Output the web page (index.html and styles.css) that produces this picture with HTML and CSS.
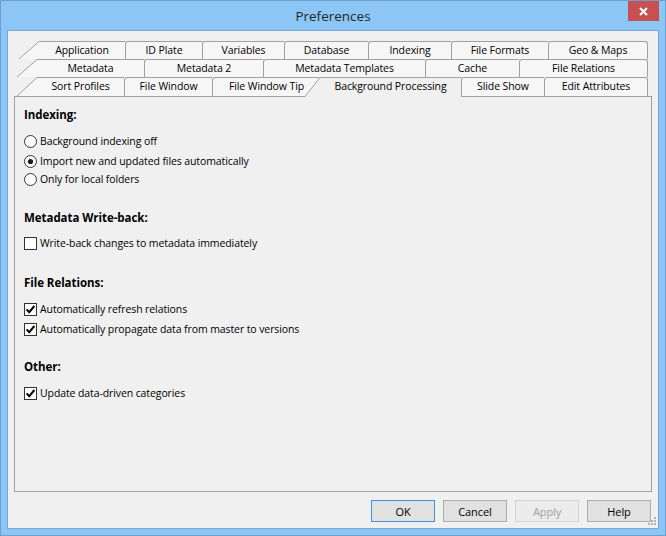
FILE: index.html
```html
<!DOCTYPE html>
<html>
<head>
<meta charset="utf-8">
<title>Preferences</title>
<link rel="stylesheet" href="styles.css">
</head>
<body>
<div class="window">
  <div class="titlebar">
    <div></div>
    <div class="title">Preferences</div>
    <div class="close">
      <svg width="31" height="20" viewBox="0 0 31 20"><path d="M12 7 L19 14 M19 7 L12 14" stroke="#fff" stroke-width="2" fill="none"/></svg>
    </div>
  </div>
  <div class="client">
    <div class="tabs">
      <div class="tabrow r1">
        <svg class="slant" viewBox="0 0 20 18" preserveAspectRatio="none"><polygon points="0,18 20,0 20,18" fill="#f6f6f6"/><line x1="0" y1="18" x2="20" y2="0.5" stroke="#a0a0a0" stroke-width="1"/></svg>
        <div class="tab first">Application</div>
        <div class="tab">ID Plate</div>
        <div class="tab">Variables</div>
        <div class="tab">Database</div>
        <div class="tab">Indexing</div>
        <div class="tab">File Formats</div>
        <div class="tab last">Geo &amp; Maps</div>
      </div>
      <div class="tabrow r2">
        <svg class="slant" viewBox="0 0 20 18" preserveAspectRatio="none"><polygon points="0,18 20,0 20,18" fill="#f6f6f6"/><line x1="0" y1="18" x2="20" y2="0.5" stroke="#a0a0a0" stroke-width="1"/></svg>
        <div class="tab first">Metadata</div>
        <div class="tab">Metadata 2</div>
        <div class="tab">Metadata Templates</div>
        <div class="tab">Cache</div>
        <div class="tab last">File Relations</div>
      </div>
      <div class="tabrow r3">
        <svg class="slant" viewBox="0 0 20 19" preserveAspectRatio="none"><polygon points="0,19 20,0 20,19" fill="#f6f6f6"/><line x1="0" y1="19" x2="20" y2="0.5" stroke="#a0a0a0" stroke-width="1"/></svg>
        <div class="tab first">Sort Profiles</div>
        <div class="tab">File Window</div>
        <div class="tab">File Window Tip</div>
        <div class="tab sel">
          <svg class="selslant" viewBox="0 0 15 20"><polygon points="15,0 15,20 0,20" fill="#f0f0f0"/><line x1="15" y1="0.5" x2="0" y2="19.5" stroke="#a0a0a0" stroke-width="1"/></svg>
          Background Processing
        </div>
        <div class="tab">Slide Show</div>
        <div class="tab last">Edit Attributes</div>
      </div>
    </div>

    <div class="panel">
      <div class="heading">Indexing:</div>
      <div class="opt after-head">
        <svg class="ctl" viewBox="0 0 13 13"><circle cx="6.5" cy="6.5" r="6" fill="#fff" stroke="#333"/></svg>
        <span>Background indexing off</span>
      </div>
      <div class="opt next-radio">
        <svg class="ctl" viewBox="0 0 13 13"><circle cx="6.5" cy="6.5" r="6" fill="#fff" stroke="#333"/><circle cx="6.5" cy="6.5" r="2.6" fill="#1a1a1a"/></svg>
        <span>Import new and updated files automatically</span>
      </div>
      <div class="opt tight">
        <svg class="ctl" viewBox="0 0 13 13"><circle cx="6.5" cy="6.5" r="6" fill="#fff" stroke="#333"/></svg>
        <span>Only for local folders</span>
      </div>

      <div class="heading section">Metadata Write-back:</div>
      <div class="opt after-head short">
        <svg class="ctl" viewBox="0 0 13 13"><rect x="0.5" y="0.5" width="12" height="12" fill="#fff" stroke="#333"/></svg>
        <span>Write-back changes to metadata immediately</span>
      </div>

      <div class="heading section wide">File Relations:</div>
      <div class="opt after-head">
        <svg class="ctl" viewBox="0 0 13 13"><rect x="0.5" y="0.5" width="12" height="12" fill="#fff" stroke="#333"/><path d="M2.6 6.4 L5.2 9.2 L10.4 3" stroke="#000" stroke-width="2" fill="none"/></svg>
        <span>Automatically refresh relations</span>
      </div>
      <div class="opt next-check">
        <svg class="ctl" viewBox="0 0 13 13"><rect x="0.5" y="0.5" width="12" height="12" fill="#fff" stroke="#333"/><path d="M2.6 6.4 L5.2 9.2 L10.4 3" stroke="#000" stroke-width="2" fill="none"/></svg>
        <span>Automatically propagate data from master to versions</span>
      </div>

      <div class="heading section narrow">Other:</div>
      <div class="opt after-head">
        <svg class="ctl" viewBox="0 0 13 13"><rect x="0.5" y="0.5" width="12" height="12" fill="#fff" stroke="#333"/><path d="M2.6 6.4 L5.2 9.2 L10.4 3" stroke="#000" stroke-width="2" fill="none"/></svg>
        <span>Update data-driven categories</span>
      </div>
    </div>

    <div class="buttons">
      <div class="btn default">OK</div>
      <div class="btn">Cancel</div>
      <div class="btn disabled">Apply</div>
      <div class="btn">Help</div>
    </div>

    <svg class="grip" viewBox="0 0 11 11">
      <rect x="8" y="1" width="2" height="2" fill="#b4b4b4"/>
      <rect x="5" y="4" width="2" height="2" fill="#b4b4b4"/>
      <rect x="8" y="4" width="2" height="2" fill="#b4b4b4"/>
      <rect x="2" y="7" width="2" height="2" fill="#b4b4b4"/>
      <rect x="5" y="7" width="2" height="2" fill="#b4b4b4"/>
      <rect x="8" y="7" width="2" height="2" fill="#b4b4b4"/>
    </svg>
  </div>
</div>
</body>
</html>
```

FILE: styles.css
```css
* { box-sizing: border-box; }
html, body { margin: 0; padding: 0; }
body {
  width: 666px;
  height: 536px;
  overflow: hidden;
  font-family: "Open Sans", "Noto Sans", sans-serif;
  font-size: 10.5px;
  letter-spacing: -0.1px;
  color: #000;
}

.window {
  width: 666px;
  height: 536px;
  border: 1px solid #6e9fce;
  background: #8bc6f6;
  display: flex;
  flex-direction: column;
}

.titlebar {
  height: 29px;
  flex: none;
  display: grid;
  grid-template-columns: 1fr auto 1fr;
}
.title {
  font-size: 13.5px;
  letter-spacing: 0;
  color: #262626;
  line-height: 30px;
}
.close {
  justify-self: end;
  align-self: start;
  margin-right: 6px;
  width: 31px;
  height: 20px;
  background: #c75050;
}
.close svg { display: block; }

.client {
  flex: 1;
  margin: 0 6px 6px;
  border: 1px solid #78a7d4;
  background: #f0f0f0;
  position: relative;
  padding: 10px 6px 0 6px;
}

/* tabs */
.tabrow {
  display: flex;
  height: 18px;
  margin: 0 4px 0 3px;
}
.tabrow.r1 { margin-left: 5px; }
.tabrow.r3 { height: 19px; }
.slant {
  flex: none;
  display: block;
  width: 20px;
  height: 100%;
}
.tab {
  flex: none;
  border-top: 1px solid #a0a0a0;
  border-left: 1px solid #a0a0a0;
  border-top-left-radius: 3px;
  background: #f6f6f6;
  text-align: center;
  line-height: 16px;
  white-space: nowrap;
}
.tab.first {
  border-left: 0;
  border-top-left-radius: 0;
}
.tab.last {
  border-right: 1px solid #a0a0a0;
  border-top-right-radius: 3px;
}
.tab.sel {
  position: relative;
  z-index: 1;
  border-left: 0;
  border-top-left-radius: 0;
  height: 20px;
  background: #f0f0f0;
}
.selslant {
  position: absolute;
  left: -15px;
  top: -1px;
  width: 15px;
  height: 20px;
}

/* tab widths, as laid out by the dialog */
.r1 .tab:nth-child(2) { width: 86px; }
.r1 .tab:nth-child(3) { width: 77px; }
.r1 .tab:nth-child(4) { width: 82px; }
.r1 .tab:nth-child(5) { width: 84px; }
.r1 .tab:nth-child(6) { width: 83px; }
.r1 .tab:nth-child(7) { width: 97px; }
.r1 .tab:nth-child(8) { width: 100px; }

.r2 .tab:nth-child(2) { width: 107px; }
.r2 .tab:nth-child(3) { width: 119px; }
.r2 .tab:nth-child(4) { width: 162px; }
.r2 .tab:nth-child(5) { width: 94px; }
.r2 .tab:nth-child(6) { width: 129px; }

.r3 .tab:nth-child(2) { width: 87px; }
.r3 .tab:nth-child(3) { width: 88px; }
.r3 .tab:nth-child(4) { width: 108px; }
.r3 .tab:nth-child(5) { width: 141px; }
.r3 .tab:nth-child(6) { width: 83px; }
.r3 .tab:nth-child(7) { width: 104px; }

/* panel */
.panel {
  height: 396px;
  border: 1px solid #a0a0a0;
  background: #f0f0f0;
  padding: 9px 9px;
}
.heading {
  font-weight: bold;
  font-size: 11.5px;
  letter-spacing: -0.05px;
  height: 18px;
  line-height: 18px;
}
.heading.section { margin-top: 21px; }
.heading.section.wide { margin-top: 22px; }
.heading.section.narrow { margin-top: 20px; }

.opt {
  display: flex;
  align-items: center;
  gap: 3px;
  height: 18px;
}
.opt.after-head { margin-top: 8px; }
.opt.after-head.short { margin-top: 7px; }
.opt.next-radio { margin-top: 2px; }
.opt.tight { margin-top: 0; }
.opt.next-check { margin-top: 2px; }
.ctl {
  flex: none;
  width: 13px;
  height: 13px;
  display: block;
}

/* buttons */
.buttons {
  display: flex;
  justify-content: flex-end;
  gap: 8px;
  margin-top: 8px;
  padding-right: 1px;
}
.btn {
  width: 64px;
  height: 22px;
  border: 1px solid #adadad;
  background: #e1e1e1;
  display: flex;
  align-items: center;
  justify-content: center;
  font-size: 11px;
}
.btn.default { border-color: #3c93e6; }
.btn.disabled {
  border-color: #d4d4d4;
  background: #ececec;
  color: #a2a2a2;
}

.grip {
  position: absolute;
  right: 1px;
  bottom: 1px;
  width: 11px;
  height: 11px;
}
```
